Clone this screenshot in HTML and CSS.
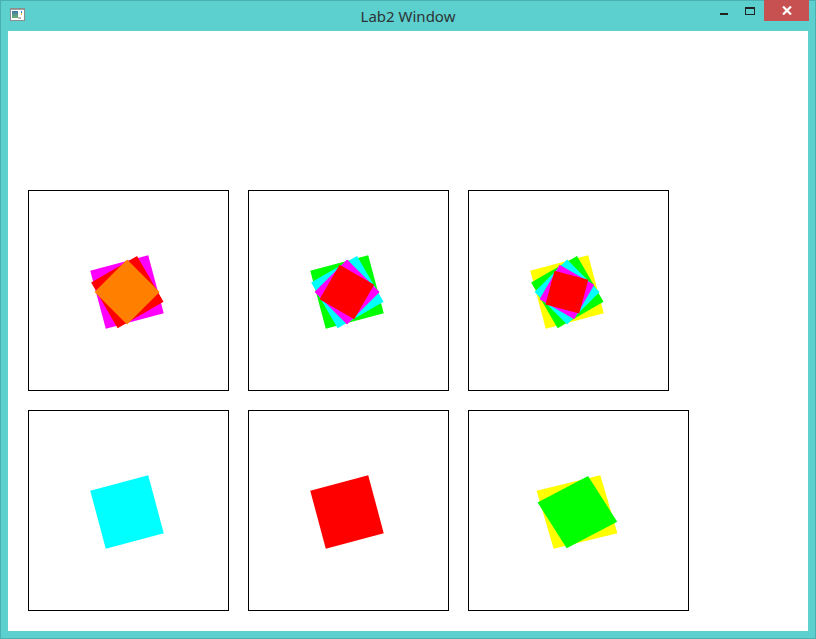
FILE: index.html
```html
<!DOCTYPE html>
<html>
<head>
<meta charset="utf-8">
<title>Lab2 Window</title>
<link rel="stylesheet" href="styles.css">
</head>
<body>
<div class="window">
  <div class="titlebar">
    <svg class="app-icon" width="16" height="14" viewBox="0 0 16 14">
      <rect x="0.5" y="0.5" width="14" height="12" fill="#ffffff" stroke="#8c8c8c"/>
      <rect x="1" y="1" width="13" height="1" fill="#a0a0a0"/>
      <defs>
        <linearGradient id="g" x1="0" y1="0" x2="0" y2="1">
          <stop offset="0" stop-color="#3a78a8"/>
          <stop offset="1" stop-color="#6fb070"/>
        </linearGradient>
      </defs>
      <rect x="2" y="3" width="6" height="7" fill="url(#g)"/>
      <rect x="11" y="3" width="1" height="2" fill="#2f7fd0"/>
      <rect x="11" y="5" width="1" height="2" fill="#e0c020"/>
      <rect x="8" y="9" width="3" height="2" fill="#b8b8b8"/>
    </svg>
    <div class="title">Lab2 Window</div>
    <div class="controls">
      <div class="btn btn-min"><span class="min-bar"></span></div>
      <div class="btn btn-max"><span class="max-box"></span></div>
      <div class="btn btn-close">
        <svg width="10" height="9" viewBox="0 0 10 9">
          <path d="M1 0.5 L9 8.5 M9 0.5 L1 8.5" stroke="#ffffff" stroke-width="2.2" fill="none"/>
        </svg>
      </div>
    </div>
  </div>
  <div class="client">
    <div class="row">
      <div class="box">
        <div class="sq s0 magenta"></div>
        <div class="sq s1 red"></div>
        <div class="sq s2 orange"></div>
      </div>
      <div class="box">
        <div class="sq s0 green"></div>
        <div class="sq s1 cyan"></div>
        <div class="sq s2 magenta"></div>
        <div class="sq s3 red"></div>
      </div>
      <div class="box">
        <div class="sq s0 yellow"></div>
        <div class="sq s1 green"></div>
        <div class="sq s2 cyan"></div>
        <div class="sq s3 magenta"></div>
        <div class="sq s4 red"></div>
      </div>
    </div>
    <div class="row">
      <div class="box">
        <div class="sq s0 cyan"></div>
      </div>
      <div class="box">
        <div class="sq s0 red"></div>
      </div>
      <div class="box wide">
        <div class="sq s0 yellow"></div>
        <div class="sq s1 green"></div>
      </div>
    </div>
  </div>
</div>
</body>
</html>
```

FILE: styles.css
```css
html, body {
  margin: 0;
  padding: 0;
  background: #5ccfcf;
}

.window {
  width: 816px;
  height: 639px;
  box-sizing: border-box;
  border: 1px solid #4bb0b0;
  background: #5ccfcf;
  display: flex;
  flex-direction: column;
}

.titlebar {
  height: 30px;
  position: relative;
  display: flex;
  align-items: flex-start;
}

.app-icon {
  margin: 7px 0 0 9px;
  display: block;
}

.title {
  position: absolute;
  left: 0;
  right: 0;
  top: 5px;
  text-align: center;
  font-family: "Noto Sans", "Open Sans", sans-serif;
  font-size: 15px;
  line-height: 20px;
  color: #2d3434;
}

.controls {
  margin-left: auto;
  margin-right: 6px;
  display: flex;
  align-items: flex-start;
  margin-top: -1px;
}

.btn {
  height: 21px;
  display: flex;
  align-items: flex-start;
  justify-content: center;
}

.btn-min {
  width: 26px;
}

.min-bar {
  display: block;
  width: 8px;
  height: 2px;
  margin-top: 13px;
  background: #222;
}

.btn-max {
  width: 26px;
  margin-right: 1px;
}

.max-box {
  display: block;
  width: 8px;
  height: 5px;
  margin-top: 7px;
  border: 1px solid #222;
  border-top-width: 2px;
}

.btn-close {
  width: 45px;
  background: #c75050;
  align-items: center;
}

.btn-close svg {
  display: block;
}

.client {
  width: 800px;
  height: 600px;
  margin: 0 0 0 7px;
  background: #ffffff;
  box-sizing: border-box;
  padding: 159px 0 0 20px;
  display: flex;
  flex-direction: column;
  gap: 19px;
}

.row {
  display: flex;
  gap: 19px;
}

.box {
  width: 201px;
  height: 201px;
  box-sizing: border-box;
  border: 1px solid #000;
  position: relative;
  overflow: hidden;
}

.box.wide {
  width: 221px;
}

.sq {
  position: absolute;
  left: 97.8px;
  top: 100.7px;
}

.wide .sq {
  left: 107.6px;
}

.s0 { width: 60px; height: 60px; transform: translate(-50%, -50%) rotate(-15deg); }
.s1 { width: 52.5px; height: 52.5px; transform: translate(-50%, -50%) rotate(-30deg); }
.s2 { width: 45.9px; height: 45.9px; transform: translate(-50%, -50%) rotate(-45deg); }
.s3 { width: 40.2px; height: 40.2px; transform: translate(-50%, -50%) rotate(-60deg); }
.s4 { width: 35.2px; height: 35.2px; transform: translate(-50%, -50%) rotate(-75deg); }

.wide .s0 { transform: translate(-50%, -50%) scaleX(1.1) rotate(-15deg); }
.wide .s1 { transform: translate(-50%, -50%) scaleX(1.1) rotate(-30deg); }

.magenta { background: #ff00ff; }
.red { background: #ff0000; }
.orange { background: #ff8000; }
.green { background: #00ff00; }
.cyan { background: #00ffff; }
.yellow { background: #ffff00; }
```
